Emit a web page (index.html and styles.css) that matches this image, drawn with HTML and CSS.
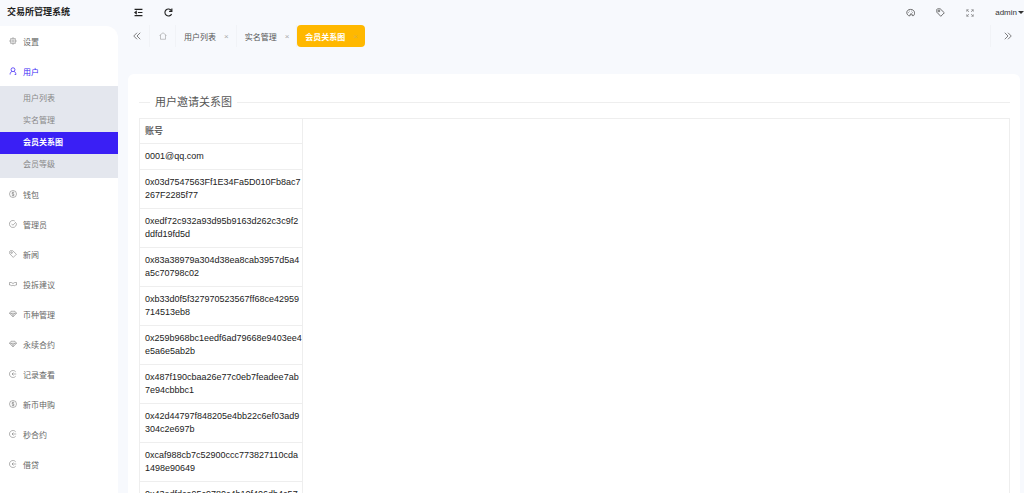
FILE: index.html
```html
<!DOCTYPE html>
<html lang="zh-CN">
<head>
  <meta charset="UTF-8" />
  <meta name="viewport" content="width=device-width, initial-scale=1.0" />
  <title>交易所管理系统</title>
  <link rel="stylesheet" href="styles.css">
</head>
<body>
  <!-- shared icons -->
  <svg class="sprite" aria-hidden="true">
    <symbol id="i-gear" viewBox="0 0 16 16"><circle cx="8" cy="8" r="5.6"/><circle cx="8" cy="8" r="2.4"/><path d="M8 .8v2M8 13.2v2M.8 8h2M13.2 8h2M2.9 2.9l1.4 1.4M11.7 11.7l1.4 1.4M13.1 2.9l-1.4 1.4M4.3 11.7l-1.4 1.4"/></symbol>
    <symbol id="i-user" viewBox="0 0 16 16"><circle cx="8" cy="5.4" r="3.9"/><path d="M2.2 15c0-3 1.4-5 3.6-6.2M10.2 8.8c2.2 1.2 3.6 3.2 3.6 6.2h-2.5"/></symbol>
    <symbol id="i-coin" viewBox="0 0 16 16"><circle cx="8" cy="8" r="7"/><path d="M10.5 5.5C9.5 4.2 5.7 4.2 5.7 6.3c0 2.3 4.8 1.1 4.8 3.5 0 2-3.8 2-5 .5M8 3.5v9"/></symbol>
    <symbol id="i-check" viewBox="0 0 16 16"><path d="M14.6 6.2A7 7 0 1 1 11.5 2M5 7.5l2.8 3L14 4"/></symbol>
    <symbol id="i-tag" viewBox="0 0 16 16"><path d="M1.500 2.500v5l7 7.300 6.300-6.300L7.500 1.500h-5z"/><circle cx="5.3" cy="5.3" r="1.5"/></symbol>
    <symbol id="i-link" viewBox="0 0 16 16"><path d="M1 5h3.500L8 7l3.500-2H15M1 10h2.500l2 2 2.500-2 2.500 2 2-2H15M1 5v5M15 5v5"/></symbol>
    <symbol id="i-gem" viewBox="0 0 16 16"><path d="M4 2.500h8l3 4-7 7.500-7-7.500zM1 6.500h14M5 6.500l3 5 3-5"/></symbol>
    <symbol id="i-back" viewBox="0 0 16 16"><path d="M13.500 3.700a7 7 0 1 0 0 8.600M14.500 8H6M9 5L6 8l3 3"/></symbol>
    <symbol id="i-fold" viewBox="0 0 16 16"><path d="M1 2.500h14M7 8h8M1 13.500h14M4 6L1.500 8 4 10z"/></symbol>
    <symbol id="i-refresh" viewBox="0 0 16 16"><path d="M13.500 10.500A6.200 6.200 0 1 1 13 4.500M14 1v5H9"/></symbol>
    <symbol id="i-left" viewBox="0 0 16 16"><path d="M8 1.500L1.500 8 8 14.500M14.500 1.500L8 8l6.500 6.500"/></symbol>
    <symbol id="i-right" viewBox="0 0 16 16"><path d="M1.500 1.500L8 8l-6.500 6.500M8 1.500L14.500 8 8 14.500"/></symbol>
    <symbol id="i-home" viewBox="0 0 16 16"><path d="M1 7l7-5.500L15 7M3 6v8.500h10V6"/></symbol>
    <symbol id="i-theme" viewBox="0 0 16 16"><path d="M4.500 13.500C-.5 10.500.5 2.500 8 2.500s9 7.500 5.500 11H11l-.5-3H8l-1 3.500z"/><path d="M4 8h1M6 5.500h1M9.500 5.500h1M11.500 8h1"/></symbol>
    <symbol id="i-full" viewBox="0 0 16 16"><path d="M1.500 5.500v-4h4M1.500 1.500l4.500 4.500M10.500 1.500h4v4M14.500 1.500L10 6M1.500 10.500v4h4M1.500 14.500L6 10M10.500 14.500h4v-4M14.500 14.500L10 10"/></symbol>
  </svg>

  <div class="layout">
    <aside class="side">
      <h1 class="logo">交易所管理系统</h1>
      <nav class="menu">
        <a class="menu-item" href="#"><svg class="icon"><use href="#i-gear"/></svg>设置</a>
        <a class="menu-item open" href="#"><svg class="icon"><use href="#i-user"/></svg>用户</a>
        <div class="submenu">
          <a href="#">用户列表</a>
          <a href="#">实名管理</a>
          <a class="current" href="#">会员关系图</a>
          <a href="#">会员等级</a>
        </div>
        <a class="menu-item" href="#"><svg class="icon"><use href="#i-coin"/></svg>钱包</a>
        <a class="menu-item" href="#"><svg class="icon"><use href="#i-check"/></svg>管理员</a>
        <a class="menu-item" href="#"><svg class="icon"><use href="#i-tag"/></svg>新闻</a>
        <a class="menu-item" href="#"><svg class="icon"><use href="#i-link"/></svg>投拆建议</a>
        <a class="menu-item" href="#"><svg class="icon"><use href="#i-gem"/></svg>币种管理</a>
        <a class="menu-item" href="#"><svg class="icon"><use href="#i-gem"/></svg>永续合约</a>
        <a class="menu-item" href="#"><svg class="icon"><use href="#i-back"/></svg>记录查看</a>
        <a class="menu-item" href="#"><svg class="icon"><use href="#i-coin"/></svg>新币申购</a>
        <a class="menu-item" href="#"><svg class="icon"><use href="#i-back"/></svg>秒合约</a>
        <a class="menu-item" href="#"><svg class="icon"><use href="#i-back"/></svg>借贷</a>
      </nav>
    </aside>

    <div class="main">
      <header class="topbar">
        <button class="tool dark" aria-label="收起菜单"><svg class="icon"><use href="#i-fold"/></svg></button>
        <button class="tool dark" aria-label="刷新"><svg class="icon"><use href="#i-refresh"/></svg></button>
        <span class="spacer"></span>
        <button class="tool" aria-label="主题"><svg class="icon"><use href="#i-theme"/></svg></button>
        <button class="tool" aria-label="便签"><svg class="icon"><use href="#i-tag"/></svg></button>
        <button class="tool" aria-label="全屏"><svg class="icon thin"><use href="#i-full"/></svg></button>
        <button class="account">admin<span class="caret"></span></button>
      </header>

      <div class="tabs">
        <button class="tab-arrow" aria-label="向左"><svg class="icon"><use href="#i-left"/></svg></button>
        <a class="tab home" href="#" aria-label="首页"><svg class="icon"><use href="#i-home"/></svg></a>
        <a class="tab" href="#">用户列表<span class="close">×</span></a>
        <a class="tab" href="#">实名管理<span class="close">×</span></a>
        <a class="tab active" href="#">会员关系图<span class="close">×</span></a>
        <span class="spacer"></span>
        <button class="tab-arrow last" aria-label="向右"><svg class="icon"><use href="#i-right"/></svg></button>
      </div>

      <main class="card">
        <h2 class="title">用户邀请关系图</h2>
        <div class="table-box">
          <table class="table">
            <thead>
              <tr><th>账号</th></tr>
            </thead>
            <tbody>
              <tr><td>0001@qq.com</td></tr>
              <tr><td>0x03d7547563Ff1E34Fa5D010Fb8ac7267F2285f77</td></tr>
              <tr><td>0xedf72c932a93d95b9163d262c3c9f2ddfd19fd5d</td></tr>
              <tr><td>0x83a38979a304d38ea8cab3957d5a4a5c70798c02</td></tr>
              <tr><td>0xb33d0f5f327970523567ff68ce42959714513eb8</td></tr>
              <tr><td>0x259b968bc1eedf6ad79668e9403ee4e5a6e5ab2b</td></tr>
              <tr><td>0x487f190cbaa26e77c0eb7feadee7ab7e94cbbbc1</td></tr>
              <tr><td>0x42d44797f848205e4bb22c6ef03ad9304c2e697b</td></tr>
              <tr><td>0xcaf988cb7c52900ccc773827110cda1498e90649</td></tr>
              <tr><td>0x43edfdca95c9780c4b10f406db4c57</td></tr>
            </tbody>
          </table>
        </div>
      </main>
    </div>
  </div>
</body>
</html>
```

FILE: styles.css
```css
* {
  box-sizing: border-box;
}
body {
  margin: 0;
  font-family: "Liberation Sans", "Noto Sans CJK SC", sans-serif;
  font-size: 8px;
  color: #555;
  background-color: #f7f9fd;
}
a {
  color: inherit;
  text-decoration: none;
}
button {
  border: none;
  padding: 0;
  background: none;
  font: inherit;
  color: inherit;
  cursor: pointer;
}
.sprite {
  display: none;
}
.icon {
  width: 8px;
  height: 8px;
  flex: none;
  fill: none;
  stroke: currentColor;
  stroke-width: 1.5;
}
.layout {
  display: flex;
  height: 100vh;
  overflow: hidden;
}
.spacer {
  flex: 1;
}

/* sidebar */
.side {
  display: flex;
  flex-direction: column;
  flex: none;
  width: 118px;
}
.logo {
  margin: 0;
  padding-left: 7px;
  font-size: 9px;
  line-height: 24px;
  height: 26px;
  color: #222;
}
.menu {
  flex: 1;
  background-color: #fff;
  border-top-right-radius: 12px;
}
.menu-item {
  display: flex;
  align-items: center;
  gap: 6px;
  height: 30px;
  padding-left: 9px;
  color: #666;
}
.menu-item .icon {
  stroke-width: 1;
}
.menu-item.open {
  color: #3a1ff5;
}
.menu-item.open .icon {
  stroke-width: 1.5;
}
.submenu {
  padding: 2px 0;
  margin-bottom: 1px;
  background-color: #e4e7ee;
}
.submenu a {
  display: block;
  padding-left: 23px;
  line-height: 22px;
  color: #888;
}
.submenu .current {
  background-color: #3a1ff5;
  color: #fff;
  font-weight: bold;
}

/* header */
.main {
  display: flex;
  flex-direction: column;
  flex: 1;
  min-width: 0;
}
.topbar {
  display: flex;
  align-items: center;
  flex: none;
  height: 25px;
  padding-left: 5px;
}
.tool {
  display: flex;
  align-items: center;
  justify-content: center;
  width: 30px;
  height: 25px;
}
.tool .icon {
  width: 9px;
  height: 9px;
}
.tool .thin {
  width: 8px;
  height: 8px;
  stroke-width: 1;
}
.dark {
  color: #222;
}
.dark .icon {
  stroke-width: 2;
}
.account {
  display: flex;
  align-items: center;
  gap: 1px;
  padding-left: 10px;
  color: #333;
}
.caret {
  border: 3px solid transparent;
  border-top-color: #333;
  border-bottom: none;
}

/* tabs */
.tabs {
  display: flex;
  flex: none;
  height: 22px;
  padding-left: 6px;
}
.tab,
.tab-arrow {
  display: flex;
  align-items: center;
  justify-content: center;
}
.tab {
  padding: 0 7px 0 8px;
  gap: 8px;
  border-right: 1px solid #f1f3f7;
}
.tab-arrow {
  width: 26px;
  border-right: 1px solid #f1f3f7;
}
.tab-arrow.last {
  width: 34px;
  border-left: 1px solid #f1f3f7;
  border-right: none;
}
.home {
  width: 26px;
  color: #888;
}
.home .icon {
  stroke-width: 1;
}
.close {
  color: #aaa;
}
.tab.active {
  border: none;
  border-radius: 4px;
  background-color: #ffb800;
  color: #fff;
  font-weight: bold;
}
.active .close {
  color: #e0b040;
  font-weight: normal;
}

/* content */
.card {
  flex: 1;
  min-height: 0;
  margin: 27px 4px 0 10px;
  padding: 20px 10px 0 11px;
  border-radius: 6px 6px 0 0;
  background-color: #fff;
  overflow: hidden;
}
.title {
  display: flex;
  align-items: center;
  gap: 5px;
  margin: 0 0 8px;
  font-size: 11px;
  font-weight: normal;
  line-height: 16px;
}
.title::before,
.title::after {
  content: "";
  width: 11px;
  border-top: 1px solid #eee;
}
.title::after {
  flex: 1;
}
.table-box {
  border: 1px solid #eee;
}
.table {
  width: 163px;
  table-layout: fixed;
  border-collapse: separate;
  border-spacing: 0;
  font-size: 9px;
  line-height: 13px;
  color: #222;
}
.table th,
.table td {
  padding: 6px 0 6px 5px;
  border-bottom: 1px solid #eee;
  border-right: 1px solid #eee;
  text-align: left;
  word-break: break-all;
}
.table th {
  padding-bottom: 5px;
  color: #666;
  font-weight: bold;
}
```
